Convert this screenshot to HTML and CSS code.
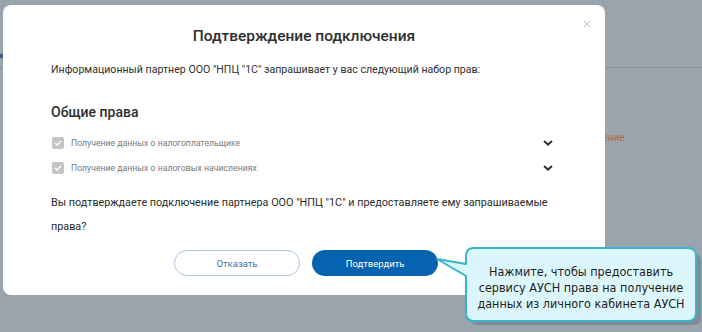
FILE: index.html
```html
<!DOCTYPE html>
<html lang="ru">
<head>
  <meta charset="UTF-8">
  <title>Подтверждение подключения</title>
  <link rel="stylesheet" href="styles.css">
</head>
<body>

  <div class="page">
    <div class="page-head">
      <span class="page-mark"></span>
    </div>
    <div class="page-body">
      <span class="page-link">Отключение</span>
    </div>
  </div>

  <div class="modal">
    <svg class="modal-close" width="8" height="8" viewBox="0 0 8 8"><path d="M0.5 0.5 L7.5 7.5 M7.5 0.5 L0.5 7.5" stroke="#bdbdbd" stroke-width="1"/></svg>
    <h2 class="modal-title">Подтверждение подключения</h2>
    <p class="modal-text">Информационный партнер ООО "НПЦ "1С" запрашивает у вас следующий набор прав:</p>

    <h3 class="rights-title">Общие права</h3>
    <div class="right-row">
      <span class="check">
        <svg width="8" height="6" viewBox="0 0 9 7"><path d="M1 3.5 L3.4 5.8 L8 1" fill="none" stroke="#fff" stroke-width="1.6"/></svg>
      </span>
      <span class="right-label">Получение данных о налогоплательщике</span>
      <svg class="chevron" width="10" height="6" viewBox="0 0 10 6"><path d="M1 1 L5 4.6 L9 1" fill="none" stroke="#333" stroke-width="2"/></svg>
    </div>
    <div class="right-row">
      <span class="check">
        <svg width="8" height="6" viewBox="0 0 9 7"><path d="M1 3.5 L3.4 5.8 L8 1" fill="none" stroke="#fff" stroke-width="1.6"/></svg>
      </span>
      <span class="right-label">Получение данных о налоговых начислениях</span>
      <svg class="chevron" width="10" height="6" viewBox="0 0 10 6"><path d="M1 1 L5 4.6 L9 1" fill="none" stroke="#333" stroke-width="2"/></svg>
    </div>

    <p class="modal-question">Вы подтверждаете подключение партнера ООО "НПЦ "1С" и предоставляете ему запрашиваемые права?</p>

    <div class="modal-buttons">
      <button class="btn btn-outline">Отказать</button>
      <button class="btn btn-primary">Подтвердить</button>
    </div>
  </div>

  <div class="hint">
    <svg class="hint-shape" width="272" height="90" viewBox="0 0 272 90">
      <path d="M42 11 Q35 11 35 18 L35 25 L9 19 L35 35 L35 75 Q35 82 42 82 L259 82 Q266 82 266 75 L266 18 Q266 11 259 11 Z" fill="#6f767d" opacity="0.55" transform="translate(3 3)"/>
      <path d="M42 8 Q34 8 34 16 L34 24 L5 19 L34 36 L34 73 Q34 81 42 81 L256 81 Q264 81 264 73 L264 16 Q264 8 256 8 Z" fill="#dcf7fb" stroke="#3ab4cb" stroke-width="2" stroke-linejoin="round"/>
    </svg>
    <div class="hint-text">Нажмите, чтобы предоставить сервису АУСН права на получение данных из личного кабинета АУСН</div>
  </div>

</body>
</html>
```

FILE: styles.css
```css
* {
  box-sizing: border-box;
}

body {
  margin: 0;
  width: 702px;
  height: 332px;
  overflow: hidden;
  background: #9aa4ad;
  font-family: 'Roboto', sans-serif;
  position: relative;
}

/* page behind the overlay */
.page-head {
  height: 68px;
  border-bottom: 1px solid #84909b;
  position: relative;
}

.page-mark {
  position: absolute;
  left: 0;
  top: 54px;
  width: 3px;
  height: 4px;
  background: #3d5f93;
}

.page-body {
  padding: 62px 0 0 566px;
  line-height: 12px;
}

.page-link {
  font-size: 10px;
  color: #ad6d3e;
}

/* modal */
.modal {
  position: absolute;
  left: 3px;
  top: 5px;
  width: 602px;
  height: 290px;
  background: #fff;
  border-radius: 8px;
  padding: 19px 48px 0 48px;
  color: #2b2b2b;
}

.modal-close {
  position: absolute;
  left: 580px;
  top: 15px;
}

.modal-title {
  margin: 0;
  text-align: center;
  font-size: 15.5px;
  line-height: 24px;
  font-weight: 500;
  color: #2e2e2e;
}

.modal-text {
  margin: 12px 0 0;
  font-size: 10.6px;
  line-height: 20px;
  color: #2f2f2f;
}

.rights-title {
  margin: 22px 0 0;
  font-size: 14px;
  line-height: 20px;
  font-weight: 500;
  color: #2e2e2e;
}

.right-row {
  display: flex;
  align-items: center;
  height: 25px;
}

.rights-title + .right-row {
  margin-top: 8px;
}

.check {
  width: 12px;
  height: 12px;
  border-radius: 2px;
  background: #c4c4c4;
  display: flex;
  align-items: center;
  justify-content: center;
  margin: 0 7px 0 1px;
}

.right-label {
  flex: 1;
  font-size: 8.7px;
  color: #7a7a7a;
}

.chevron {
  margin-right: 4px;
}

.modal-question {
  margin: 11px 0 0;
  font-size: 10.8px;
  line-height: 24px;
  color: #2b2b2b;
}

.modal-buttons {
  display: flex;
  justify-content: center;
  gap: 12px;
  margin-top: 11px;
  padding-left: 4px;
}

.btn {
  width: 126px;
  height: 26px;
  border-radius: 13px;
  font-family: 'Roboto', sans-serif;
  font-size: 9.5px;
  cursor: pointer;
}

.btn-outline {
  background: #fff;
  border: 1px solid #a8c8e6;
  color: #3f72ab;
}

.btn-primary {
  background: #0563b0;
  border: none;
  color: #fff;
}

/* hint bubble */
.hint {
  position: absolute;
  left: 432px;
  top: 240px;
  width: 272px;
  height: 90px;
}

.hint-shape {
  position: absolute;
  left: 0;
  top: 0;
}

.hint-text {
  position: absolute;
  left: 34px;
  top: 12px;
  width: 230px;
  height: 72px;
  display: flex;
  align-items: center;
  justify-content: center;
  text-align: center;
  font-family: 'DejaVu Sans Condensed', 'DejaVu Sans', sans-serif;
  font-size: 12.5px;
  line-height: 16px;
  color: #1e1e1e;
  padding: 0 6px;
}
```
